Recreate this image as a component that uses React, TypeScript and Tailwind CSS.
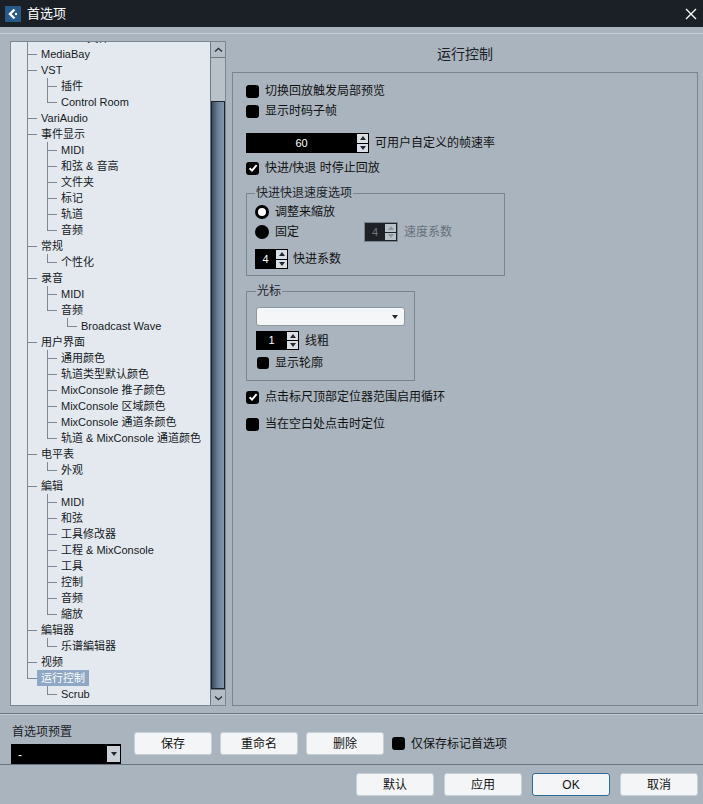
import React from "react";

type Node = { label: string; children?: Node[]; selected?: boolean };

const node = (label: string, children?: (Node | string)[], selected?: boolean): Node => ({
  label,
  selected,
  children: children?.map((c) => (typeof c === "string" ? { label: c } : c)),
});

const tree: Node[] = [
  node("MediaBay"),
  node("VST", ["插件", "Control Room"]),
  node("VariAudio"),
  node("事件显示", ["MIDI", "和弦 & 音高", "文件夹", "标记", "轨道", "音频"]),
  node("常规", ["个性化"]),
  node("录音", ["MIDI", node("音频", ["Broadcast Wave"])]),
  node("用户界面", [
    "通用颜色",
    "轨道类型默认颜色",
    "MixConsole 推子颜色",
    "MixConsole 区域颜色",
    "MixConsole 通道条颜色",
    "轨道 & MixConsole 通道颜色",
  ]),
  node("电平表", ["外观"]),
  node("編辑", ["MIDI", "和弦", "工具修改器", "工程 & MixConsole", "工具", "控制", "音频", "縮放"]),
  node("編辑器", ["乐谱編辑器"]),
  node("视频"),
  node("运行控制", ["Scrub"], true),
];

type Row = { label: string; guides: boolean[]; last: boolean; selected?: boolean };

function flatten(nodes: Node[], guides: boolean[] = []): Row[] {
  const rows: Row[] = [];
  nodes.forEach((n, i) => {
    const last = i === nodes.length - 1;
    rows.push({ label: n.label, guides, last, selected: n.selected });
    if (n.children) rows.push(...flatten(n.children, [...guides, !last]));
  });
  return rows;
}

// the list is scrolled: the last child of "MIDI" sits half above the top edge
const rows: Row[] = [{ label: "MIDI 文件", guides: [true], last: true }, ...flatten(tree)];

// one 20px column of tree connector lines
function Guide({ kind }: { kind: "pass" | "blank" | "tee" | "end" }) {
  return (
    <svg width="20" height="16" className="shrink-0">
      {(kind === "pass" || kind === "tee") && <line x1="10.5" y1="0" x2="10.5" y2="16" stroke="#7e8994" />}
      {kind === "end" && <line x1="10.5" y1="0" x2="10.5" y2="8.5" stroke="#7e8994" />}
      {(kind === "tee" || kind === "end") && <line x1="10" y1="8.5" x2="20" y2="8.5" stroke="#7e8994" />}
    </svg>
  );
}

function TreeRow({ row }: { row: Row }) {
  return (
    <div className="flex h-[16px] items-center">
      {row.guides.map((g, i) => (
        <Guide key={i} kind={g ? "pass" : "blank"} />
      ))}
      <Guide kind={row.last ? "end" : "tee"} />
      <span
        className={`px-[4px] leading-[16px] whitespace-nowrap ${
          row.selected ? "bg-[#8ea7c4] text-white" : "text-[#15191d]"
        }`}
      >
        {row.label}
      </span>
    </div>
  );
}

function Chevron({ down }: { down?: boolean }) {
  return (
    <svg width="9" height="6" viewBox="0 0 9 6">
      <path d={down ? "M1 1.5 L4.5 4.5 L8 1.5" : "M1 4.5 L4.5 1.5 L8 4.5"} stroke="#2a323a" strokeWidth="1.4" fill="none" />
    </svg>
  );
}

function Check({ on, small }: { on?: boolean; small?: boolean }) {
  return (
    <span
      className={`flex shrink-0 items-center justify-center rounded-[3px] bg-black ${
        small ? "h-[12px] w-[12px]" : "h-[13px] w-[13px]"
      }`}
    >
      {on && (
        <svg width="10" height="10" viewBox="0 0 10 10">
          <path d="M1.6 5.2 L4 7.6 L8.6 2.2" stroke="white" strokeWidth="2" fill="none" />
        </svg>
      )}
    </span>
  );
}

function Radio({ on }: { on?: boolean }) {
  return on ? (
    <span className="h-[14px] w-[14px] shrink-0 rounded-full border-[3px] border-black bg-white" />
  ) : (
    <span className="h-[14px] w-[14px] shrink-0 rounded-full bg-black" />
  );
}

function Tri({ down, dim }: { down?: boolean; dim?: boolean }) {
  return (
    <svg width="6" height="4" viewBox="0 0 6 4">
      <path d={down ? "M0 0 L6 0 L3 4 Z" : "M0 4 L6 4 L3 0 Z"} fill={dim ? "#8d969f" : "#22282e"} />
    </svg>
  );
}

function Spinner({
  value,
  boxClass,
  disabled,
  h = "h-[20px]",
}: {
  value: string;
  boxClass: string;
  disabled?: boolean;
  h?: string;
}) {
  return (
    <div className={`flex shrink-0 ${h} ${disabled ? "border border-[#7a848e]" : ""}`}>
      <div
        className={`${boxClass} flex items-center justify-center text-[11px] ${
          disabled ? "bg-[#1e2226] text-[#6f7982]" : "bg-black text-white"
        }`}
      >
        {value}
      </div>
      <div className={`flex w-[12px] flex-col gap-px py-px pr-px ${disabled ? "bg-[#1e2226]" : "bg-black"}`}>
        <div className={`flex flex-1 items-center justify-center ${disabled ? "bg-[#b9c1c9]" : "bg-[#d9dfe4]"}`}>
          <Tri dim={disabled} />
        </div>
        <div className={`flex flex-1 items-center justify-center ${disabled ? "bg-[#b9c1c9]" : "bg-[#d9dfe4]"}`}>
          <Tri down dim={disabled} />
        </div>
      </div>
    </div>
  );
}

function Button({ children, primary }: { children: React.ReactNode; primary?: boolean }) {
  return (
    <button
      className={`flex h-[23px] w-[78px] items-center justify-center rounded-[3px] bg-[#f3f5f7] text-[12px] text-[#111] ${
        primary ? "border border-[#2e6a98]" : "border border-[#c9d0d6]"
      }`}
    >
      {children}
    </button>
  );
}

export default function App() {
  return (
    <div className="flex h-[804px] w-[703px] flex-col overflow-hidden bg-[#a9b4be] font-['Liberation_Sans','Noto_Sans_CJK_SC',sans-serif] text-[12px] text-[#111]">
      {/* title bar */}
      <div className="flex h-[27px] shrink-0 items-center bg-[#1b2027] pl-[5px] pr-[3px]">
        <svg width="16" height="16" viewBox="0 0 16 16">
          <rect width="16" height="16" rx="1" fill="#27598a" />
          <path d="M9.5 3.5 L5 8 L9.5 12.5" stroke="white" strokeWidth="2.4" fill="none" />
          <circle cx="11" cy="8" r="1.2" fill="white" />
        </svg>
        <span className="ml-[6px] text-[13px] text-white">首选项</span>
        <svg width="12" height="12" viewBox="0 0 12 12" className="ml-auto mr-[3px]">
          <path d="M1 1 L11 11 M11 1 L1 11" stroke="white" strokeWidth="1.3" />
        </svg>
      </div>

      <div className="mt-[6px] h-px bg-[#c6ced5]" />

      {/* body */}
      <div className="mt-[7px] flex h-[665px] shrink-0 gap-[6px] pl-[10px]">
        <div className="flex w-[216px] border border-[#7c8690]">
          <div className="flex-1 overflow-hidden bg-[#e4e9ef] pl-[6px] text-[11px]">
            <div className="-mt-[12px]">
              {rows.map((r, i) => (
                <TreeRow key={i} row={r} />
              ))}
            </div>
          </div>
          <div className="flex w-[15px] flex-col border-l border-[#6e7882] bg-[#b9c1c9]">
            <div className="flex h-[16px] items-center justify-center border-b border-[#6e7882] bg-[#b4bdc5]">
              <Chevron />
            </div>
            <div className="h-[43px]" />
            <div className="flex-1 border border-[#1c242c] bg-gradient-to-r from-[#3c4c5e] via-[#6c8197] to-[#8397ab]" />
            <div className="flex h-[16px] items-center justify-center border-t border-[#6e7882] bg-[#b4bdc5]">
              <Chevron down />
            </div>
          </div>
        </div>

        <div className="flex w-[466px] flex-col">
          <div className="flex h-[31px] justify-center pt-[3px] text-[14px] leading-[20px] text-[#1b2026]">运行控制</div>
          <div className="flex flex-1 flex-col border border-[#7b858f] pl-[13px] pt-[8px]">
            <div className="flex h-[20px] items-center gap-[6px]">
              <Check />
              <span>切换回放触发局部预览</span>
            </div>
            <div className="flex h-[20px] items-center gap-[6px]">
              <Check />
              <span>显示时码子帧</span>
            </div>
            <div className="mt-[12px] flex h-[20px] items-center gap-[6px]">
              <Spinner value="60" boxClass="w-[111px]" />
              <span>可用户自定义的帧速率</span>
            </div>
            <div className="mt-[5px] flex h-[20px] items-center gap-[6px]">
              <Check on />
              <span>快进/快退 时停止回放</span>
            </div>

            <fieldset className="mt-[7px] w-[259px] border border-[#7b858f] pb-[6px] pl-[8px]">
              <legend className="px-[1px] leading-[16px] text-[#1d2328]">快进快退速度选项</legend>
              <div className="mt-[1px] flex h-[20px] items-center gap-[6px]">
                <Radio on />
                <span>调整来縮放</span>
              </div>
              <div className="flex h-[20px] items-center">
                <div className="flex w-[109px] items-center gap-[6px]">
                  <Radio />
                  <span>固定</span>
                </div>
                <Spinner value="4" boxClass="w-[20px]" disabled />
                <span className="ml-[6px] text-[#66717c]">速度系数</span>
              </div>
              <div className="mt-[7px] flex h-[20px] items-center gap-[5px]">
                <Spinner value="4" boxClass="w-[21px]" />
                <span>快进系数</span>
              </div>
            </fieldset>

            <fieldset className="mt-[7px] w-[169px] border border-[#7b858f] pb-[7px] pl-[9px]">
              <legend className="px-[1px] leading-[16px] text-[#1d2328]">光标</legend>
              <div className="mt-[8px] flex h-[19px] w-[149px] items-center justify-end rounded-[3px] border border-[#8d979f] bg-[#f4f6f8] pr-[6px]">
                <Tri down />
              </div>
              <div className="mt-[5px] flex h-[19px] items-center gap-[6px]">
                <Spinner value="1" boxClass="w-[31px]" h="h-[19px]" />
                <span>线粗</span>
              </div>
              <div className="mt-[3px] flex h-[20px] items-center gap-[6px] pl-px">
                <Check small />
                <span>显示轮廓</span>
              </div>
            </fieldset>

            <div className="mt-[6px] flex h-[20px] items-center gap-[6px]">
              <Check on />
              <span>点击标尺顶部定位器范围启用循环</span>
            </div>
            <div className="mt-[7px] flex h-[20px] items-center gap-[6px]">
              <Check />
              <span>当在空白处点击时定位</span>
            </div>
          </div>
        </div>
      </div>

      {/* preset bar */}
      <div className="mt-[7px] h-px bg-[#6b7580]" />
      <div className="h-px bg-[#c2cad2]" />
      <div className="flex h-[49px] items-start pl-[11px]">
        <div className="flex w-[110px] flex-col">
          <span className="mt-[9px] pl-px leading-[16px] text-[#1d2328]">首选项预置</span>
          <div className="mt-[4px] flex h-[20px] items-stretch bg-black">
            <span className="flex-1 pl-[7px] text-[12px] leading-[22px] text-white">-</span>
            <div className="my-[2px] mr-px flex w-[13px] items-center justify-center bg-[#c9d0d6]">
              <Tri down />
            </div>
          </div>
        </div>
        <div className="ml-[13px] mt-[17px] flex items-center gap-[8px]">
          <Button>保存</Button>
          <Button>重命名</Button>
          <Button>删除</Button>
          <div className="flex items-center gap-[6px]">
            <Check />
            <span>仅保存标记首选项</span>
          </div>
        </div>
      </div>
      <div className="h-px bg-[#6b7580]" />

      {/* dialog buttons */}
      <div className="mt-[8px] flex justify-end gap-[10px] pr-[5px]">
        <Button>默认</Button>
        <Button>应用</Button>
        <Button primary>OK</Button>
        <Button>取消</Button>
      </div>
    </div>
  );
}
